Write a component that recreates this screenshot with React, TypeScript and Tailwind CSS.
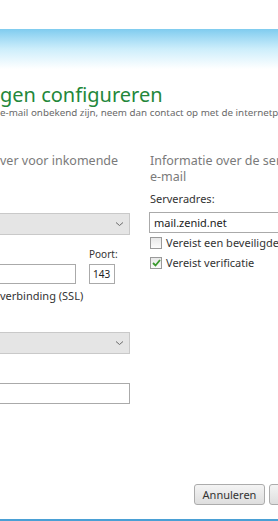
import React from "react";

const font = { fontFamily: '"Noto Sans", "Open Sans", sans-serif' };

function Chevron() {
  return (
    <svg width="9" height="6" viewBox="0 0 9 6" className="shrink-0">
      <path d="M1 1.5 L4.5 4.5 L8 1.5" fill="none" stroke="#6b6b6b" strokeWidth="1" />
    </svg>
  );
}

function Check({ checked }: { checked?: boolean }) {
  return (
    <span className="w-[12px] h-[12px] border border-[#9a9a9a] bg-gradient-to-b from-[#e8e8e8] to-[#fbfbfb] flex items-center justify-center shrink-0">
      {checked && (
        <svg width="9" height="8" viewBox="0 0 9 8">
          <path d="M1 4 L3.5 6.5 L8 1" fill="none" stroke="#3a9a2e" strokeWidth="1.8" />
        </svg>
      )}
    </span>
  );
}

export default function App() {
  return (
    <div className="w-[278px] h-[521px] bg-white overflow-hidden flex flex-col relative" style={font}>
      <div className="h-[29px] bg-white" />
      <div className="h-[40px] bg-gradient-to-b from-[#7fccef] via-[#cdeefb] to-white" />
      <div className="pt-[13px] text-[20px] leading-[25px] text-[#23873a] whitespace-nowrap">gen configureren</div>
      <div className="text-[9.8px] leading-[12px] text-[#6a6a6a] whitespace-nowrap">e-mail onbekend zijn, neem dan contact op met de internetprovider</div>
      <div className="flex mt-[34px]">
        <div className="w-[150px] shrink-0 flex flex-col">
          <div className="text-[12.5px] leading-[16px] text-[#7a7a7a] whitespace-nowrap">ver voor inkomende</div>
          <div className="mt-[44px] h-[22px] w-[130px] bg-[#e5e5e5] border border-l-0 border-[#c9c9c9] flex items-center justify-end pr-[5px]">
            <Chevron />
          </div>
          <div className="flex mt-[12px]">
            <div className="w-[89px] shrink-0" />
            <div className="text-[10px] leading-[14px] text-[#333]">Poort:</div>
          </div>
          <div className="flex mt-[3px] items-center">
            <div className="w-[76px] h-[20px] border border-l-0 border-[#aaa]" />
            <div className="ml-[13px] w-[26px] h-[20px] border border-[#aaa] text-[10px] leading-[18px] pl-[3px] text-[#222]">143</div>
          </div>
          <div className="text-[11px] leading-[16px] text-[#333] whitespace-nowrap mt-[4px]">verbinding (SSL)</div>
          <div className="mt-[28px] h-[22px] w-[130px] bg-[#e5e5e5] border border-l-0 border-[#c9c9c9] flex items-center justify-end pr-[5px]">
            <Chevron />
          </div>
          <div className="mt-[29px] h-[21px] w-[130px] border border-l-0 border-[#aaa]" />
        </div>
        <div className="flex-1 flex flex-col">
          <div className="text-[12.5px] leading-[16px] text-[#7a7a7a] whitespace-nowrap">Informatie over de server voor uitgaande</div>
          <div className="text-[12.5px] leading-[16px] text-[#7a7a7a]">e-mail</div>
          <div className="mt-[6px] text-[11px] leading-[16px] text-[#333]">Serveradres:</div>
          <div className="mt-[5px] h-[21px] border border-r-0 border-[#aaa] ml-[-1px] text-[11px] leading-[19px] pl-[4px] text-[#222] whitespace-nowrap">mail.zenid.net</div>
          <div className="mt-[2px] flex items-center gap-[4px] text-[11px] leading-[16px] text-[#333] whitespace-nowrap">
            <Check />
            <span>Vereist een beveiligde verbinding (SSL)</span>
          </div>
          <div className="mt-[4px] flex items-center gap-[4px] text-[11px] leading-[16px] text-[#333] whitespace-nowrap">
            <Check checked />
            <span>Vereist verificatie</span>
          </div>
        </div>
      </div>
      <div className="flex-1" />
      <div className="flex justify-end gap-[4px] mr-[-62px] mb-[14px]">
        <div className="w-[71px] h-[21px] border border-[#acacac] rounded-[3px] bg-gradient-to-b from-[#f4f4f4] to-[#dedede] text-[11px] leading-[19px] text-[#333] text-center">Annuleren</div>
        <div className="w-[71px] h-[21px] border border-[#acacac] rounded-[3px] bg-gradient-to-b from-[#f4f4f4] to-[#dedede] text-[11px] leading-[19px] text-[#333] text-center">Volgende</div>
      </div>
      <div className="h-[2px] bg-[#4aa0d5]" />
    </div>
  );
}
